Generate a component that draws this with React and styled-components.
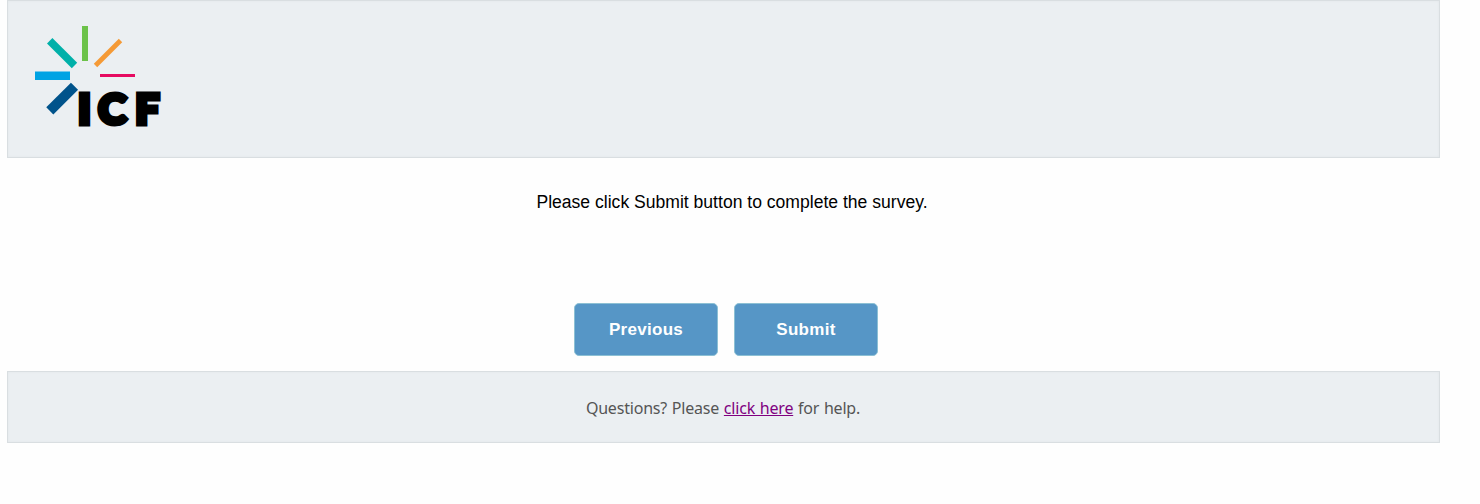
import React from 'react';
import styled, { createGlobalStyle } from 'styled-components';

const GlobalStyle = createGlobalStyle`
  body {
    margin: 0;
    background: #fefefe;
  }
`;
const Page = styled.div`
  width: 1433px;
  height: 504px;
  margin-left: 7px;
  font-family: 'Liberation Sans', Arial, sans-serif;
`;
const Panel = styled.div`
  box-sizing: border-box;
  background: #ebeff2;
  border: 1px solid #d9dee1;
  box-shadow: inset 0 0 3px rgba(0, 0, 0, 0.04);
`;
const Header = styled(Panel)`
  height: 158px;
  padding: 13px 26px;
`;
const Logo = styled.svg`
  display: block;
`;
const LogoText = styled.text`
  font-family: Lato, sans-serif;
  font-size: 42.5px;
  font-weight: 900;
  fill: #000;
  stroke: #000;
`;
const Message = styled.p`
  box-sizing: border-box;
  height: 145px;
  margin: 0;
  padding: 34px 0 0 17px;
  font-size: 17.57px;
  line-height: 20px;
  text-align: center;
  color: #000;
`;
const Actions = styled.div`
  display: flex;
  justify-content: center;
  gap: 16px;
  padding: 0 0 15px 5px;
`;
const Button = styled.button`
  width: 144px;
  height: 53px;
  padding: 0;
  border: 1px solid #8cc0d4;
  border-radius: 5px;
  background: #5696c6;
  color: #fff;
  font-family: inherit;
  font-size: 17px;
  font-weight: bold;
  letter-spacing: 0.3px;
`;
const Footer = styled(Panel)`
  height: 72px;
  padding: 25px 1px 0 0;
  font-family: 'Noto Sans', sans-serif;
  font-size: 16px;
  line-height: 22px;
  letter-spacing: -0.2px;
  word-spacing: 0.8px;
  text-align: center;
  color: #555;
`;
const Link = styled.a`
  color: #800080;
  text-decoration: underline;
`;

function IcfLogo() {
  return (
    <Logo width="140" height="130" viewBox="34 14 140 130" role="img" aria-label="ICF">
      <path d="M85 26V61" stroke="#6cc24a" strokeWidth="6" />
      <path d="M49.7 40.7L74.5 65.5" stroke="#00b0a9" strokeWidth="7.6" />
      <path d="M120.5 40.5L95.5 65.5" stroke="#f59a36" strokeWidth="4.8" />
      <path d="M35 75.7H70" stroke="#00a3e4" strokeWidth="8.6" />
      <path d="M100 75.5H135" stroke="#e60b61" strokeWidth="3" />
      <path d="M74.5 86.2L49.8 110.9" stroke="#00538b" strokeWidth="10" />
      <LogoText x="78 98.2 135.2" y="123.8" strokeWidth="5">ICF</LogoText>
    </Logo>
  );
}

export default function App() {
  return (
    <Page>
      <GlobalStyle />
      <Header>
        <IcfLogo />
      </Header>
      <Message>Please click Submit button to complete the survey.</Message>
      <Actions>
        <Button>Previous</Button>
        <Button>Submit</Button>
      </Actions>
      <Footer>
        Questions? Please <Link href="#">click here</Link> for help.
      </Footer>
    </Page>
  );
}
